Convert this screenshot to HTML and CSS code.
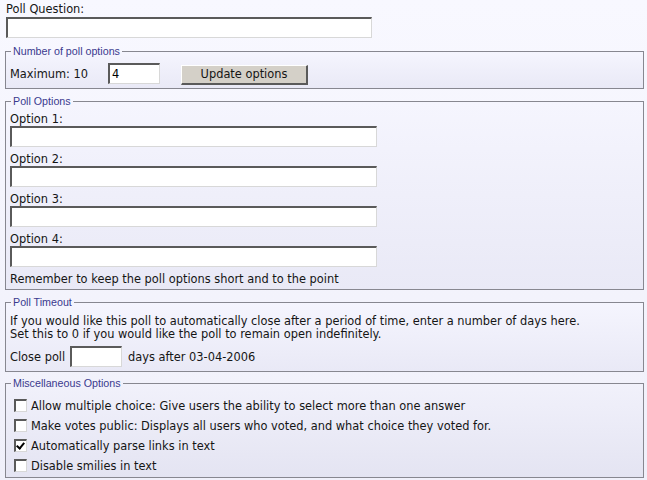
FILE: index.html
```html
<!DOCTYPE html>
<html>
<head>
<meta charset="utf-8">
<link rel="stylesheet" href="styles.css">
</head>
<body>
<div class="question">
  <div class="label">Poll Question:</div>
  <input class="text wide q" type="text">
</div>

<fieldset class="box">
  <legend>Number of poll options</legend>
  <div class="row">
    <span class="max-label">Maximum: 10</span>
    <input class="text small" type="text" value="4">
    <button class="btn" type="button">Update options</button>
  </div>
</fieldset>

<fieldset class="box">
  <legend>Poll Options</legend>
  <div class="opt-label">Option 1:</div>
  <input class="text wide opt" type="text">
  <div class="opt-label">Option 2:</div>
  <input class="text wide opt" type="text">
  <div class="opt-label">Option 3:</div>
  <input class="text wide opt" type="text">
  <div class="opt-label">Option 4:</div>
  <input class="text wide opt" type="text">
  <div class="note">Remember to keep the poll options short and to the point</div>
</fieldset>

<fieldset class="box">
  <legend>Poll Timeout</legend>
  <div class="para">If you would like this poll to automatically close after a period of time, enter a number of days here.<br>Set this to 0 if you would like the poll to remain open indefinitely.</div>
  <div class="row close-row">
    <span class="close-label">Close poll</span>
    <input class="text small" type="text">
    <span class="after">days after 03-04-2006</span>
  </div>
</fieldset>

<fieldset class="box last">
  <legend>Miscellaneous Options</legend>
  <label class="check"><input class="cb" type="checkbox"><span>Allow multiple choice: Give users the ability to select more than one answer</span></label>
  <label class="check"><input class="cb" type="checkbox"><span>Make votes public: Displays all users who voted, and what choice they voted for.</span></label>
  <label class="check"><input class="cb" type="checkbox" checked><span>Automatically parse links in text</span></label>
  <label class="check"><input class="cb" type="checkbox"><span>Disable smilies in text</span></label>
</fieldset>
</body>
</html>
```

FILE: styles.css
```css
html {
  background: linear-gradient(#f8f8ff, #f0f0fa);
  min-height: 100%;
}
body {
  margin: 3px 3px 0 5px;
  font-family: "DejaVu Sans", sans-serif;
  font-size: 11.4px;
  color: #151515;
}
.question .label {
  line-height: 13px;
  padding-left: 1px;
}
.text {
  box-sizing: border-box;
  height: 21px;
  border-width: 2px 1px 1px 2px;
  border-style: solid;
  border-color: #5a5a5a #d8d8d8 #d8d8d8 #5a5a5a;
  background: #fff;
  font-family: inherit;
  font-size: 11.4px;
  padding: 1px 2px;
  margin: 0;
  outline: none;
}
.wide.q {
  display: block;
  width: 366px;
  margin: 1px 0 0 1px;
}
.wide.opt {
  display: block;
  width: 367px;
  margin-bottom: 4px;
}
.small {
  width: 52px;
}
.box {
  margin: 7px 0 0 0;
  padding: 3px 4px 3px 4px;
  border: 1px solid #878790;
  background: linear-gradient(#f5f5fe, #e9e9f6);
  min-width: 0;
}
.box + .box {
  margin-top: 6px;
}
.box.last {
  margin-top: 5px;
  padding-top: 5px;
  padding-bottom: 2px;
  background: linear-gradient(#f1f1fb, #e4e4f2);
}
legend {
  font-family: "Liberation Sans Narrow", "Liberation Sans", sans-serif;
  font-size: 10.7px;
  line-height: 13px;
  color: #3a3a8e;
  padding: 0 2px;
  margin-left: 1px;
}
.row {
  display: flex;
  align-items: center;
  height: 23px;
  margin-top: 1px;
}
.max-label {
  width: 98px;
  padding-top: 1px;
}
.btn {
  box-sizing: border-box;
  margin-left: 21px;
  margin-top: 2px;
  width: 127px;
  height: 20px;
  background: #d4d0c8;
  border-width: 1px 2px 2px 1px;
  border-style: solid;
  border-color: #fff #5a5a5a #5a5a5a #fff;
  font-family: inherit;
  font-size: 11.4px;
  color: #151515;
  padding: 0;
}
.opt-label {
  line-height: 13px;
  padding-top: 2px;
}
.note {
  line-height: 13px;
  padding-top: 2px;
}
.para {
  line-height: 13px;
  margin-top: 3px;
}
.close-row {
  margin-top: 4px;
}
.close-label {
  width: 60px;
}
.after {
  margin-left: 6px;
}
.check {
  display: flex;
  align-items: center;
  height: 20px;
}
.check span {
  padding-top: 1px;
}
.cb {
  appearance: none;
  -webkit-appearance: none;
  box-sizing: border-box;
  width: 13px;
  height: 13px;
  margin: 0 4px 0 4px;
  border-width: 2px 1px 1px 2px;
  border-style: solid;
  border-color: #5a5a5a #d8d8d8 #d8d8d8 #5a5a5a;
  background: #fff;
  position: relative;
}
.cb:checked::after {
  content: "";
  position: absolute;
  left: 2px;
  top: 0px;
  width: 3px;
  height: 6px;
  border: solid #000;
  border-width: 0 2px 2px 0;
  transform: rotate(40deg);
}
```
